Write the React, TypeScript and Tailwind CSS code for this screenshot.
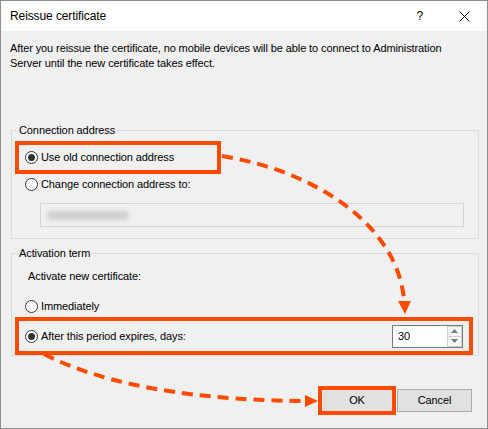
import React from "react";

function Radio({ checked }: { checked?: boolean }) {
  return (
    <span className="w-[13px] h-[13px] rounded-full border border-[#333333] bg-white flex items-center justify-center shrink-0">
      {checked && <span className="w-[7px] h-[7px] rounded-full bg-[#333333]" />}
    </span>
  );
}

export default function App() {
  return (
    <div className="w-[488px] h-[429px] relative flex flex-col border border-[#8f8f8f] bg-[#f0f0f0] text-[11px] leading-[15px] text-black font-['Liberation_Sans',Arial,sans-serif] tracking-[-0.1px] overflow-hidden">
      {/* Title bar */}
      <div className="h-[30px] bg-white flex items-center pl-[9px] shrink-0">
        <span className="text-[12px] tracking-[-0.1px]">Reissue certificate</span>
        <span className="ml-auto text-[12px]">?</span>
        <svg className="ml-[36px] mr-[17px]" width="11" height="11" viewBox="0 0 11 11">
          <path d="M0.5 0.5 L10.5 10.5 M10.5 0.5 L0.5 10.5" stroke="#000" strokeWidth="1" fill="none" />
        </svg>
      </div>

      {/* Body */}
      <p className="px-[9px] pt-[10px]">
        After you reissue the certificate, no mobile devices will be able to connect to Administration
        <br />
        Server until the new certificate takes effect.
      </p>

      {/* Connection address */}
      <fieldset className="ml-[10px] mr-[8px] mt-[52px] border border-[#dcdcdc] pb-[11px]">
        <legend className="ml-[6px] px-[1px] leading-[15px]">Connection address</legend>
        <div className="ml-[3px] mt-[3px] w-[206px] h-[33px] border-4 border-[#ff4a00] flex items-center pl-[6px] gap-[3px]">
          <Radio checked />
          <span>Use old connection address</span>
        </div>
        <div className="ml-[13px] h-[21px] flex items-center gap-[3px]">
          <Radio />
          <span>Change connection address to:</span>
        </div>
        <div className="ml-[28px] mt-[8px] w-[424px] h-[24px] border border-[#d4d4d4] bg-[#f0f0f0] flex items-center">
          <div className="ml-[6px] w-[82px] h-[9px] rounded-sm bg-[#cfcfcf] blur-[2px]" />
        </div>
      </fieldset>

      {/* Activation term */}
      <fieldset className="ml-[10px] mr-[8px] mt-[7px] border border-[#dcdcdc]">
        <legend className="ml-[6px] px-[1px] leading-[15px]">Activation term</legend>
        <div className="ml-[16px] mt-[8px] h-[15px]">Activate new certificate:</div>
        <div className="ml-[13px] mt-[12px] h-[21px] flex items-center gap-[3px]">
          <Radio />
          <span>Immediately</span>
        </div>
        <div className="ml-[3px] w-[458px] h-[38px] border-4 border-[#ff4a00] flex items-center pl-[6px] pr-[6px] gap-[3px]">
          <Radio checked />
          <span>After this period expires, days:</span>
          <div className="ml-auto w-[71px] h-[23px] border border-[#7a7a7a] bg-white flex">
            <span className="flex-1 pl-[5px] flex items-center">30</span>
            <div className="w-[15px] flex flex-col">
              <div className="flex-1 border border-[#d0d0d0] bg-[#f7f7f7] flex items-center justify-center">
                <svg width="7" height="4" viewBox="0 0 7 4"><path d="M0 4 L3.5 0 L7 4 Z" fill="#7a7a7a" /></svg>
              </div>
              <div className="flex-1 border border-t-0 border-[#d0d0d0] bg-[#f7f7f7] flex items-center justify-center">
                <svg width="7" height="4" viewBox="0 0 7 4"><path d="M0 0 L7 0 L3.5 4 Z" fill="#7a7a7a" /></svg>
              </div>
            </div>
          </div>
        </div>
      </fieldset>

      {/* Buttons */}
      <div className="mt-[30px] mr-[15px] flex justify-end items-center gap-[1px]">
        <button className="w-[78px] h-[29px] border-4 border-[#ff4a00] bg-[#e1e1e1] flex items-center justify-center">
          OK
        </button>
        <button className="w-[75px] h-[23px] border border-[#adadad] bg-[#e1e1e1] flex items-center justify-center">
          Cancel
        </button>
      </div>

      {/* Annotation arrows */}
      <svg className="absolute left-[-1px] top-[-1px] pointer-events-none" width="488" height="429" viewBox="0 0 488 429">
        <path d="M222 156 C 320 172, 398 228, 404 300" stroke="#ff4a00" strokeWidth="4" strokeDasharray="11 7" fill="none" />
        <path d="M398 301 L411 301 L405 314 Z" fill="#ff4a00" />
        <path d="M44 354 C 90 378, 170 400, 304 401" stroke="#ff4a00" strokeWidth="4" strokeDasharray="11 7" fill="none" />
        <path d="M305 395 L305 407 L318 401 Z" fill="#ff4a00" />
      </svg>
    </div>
  );
}
